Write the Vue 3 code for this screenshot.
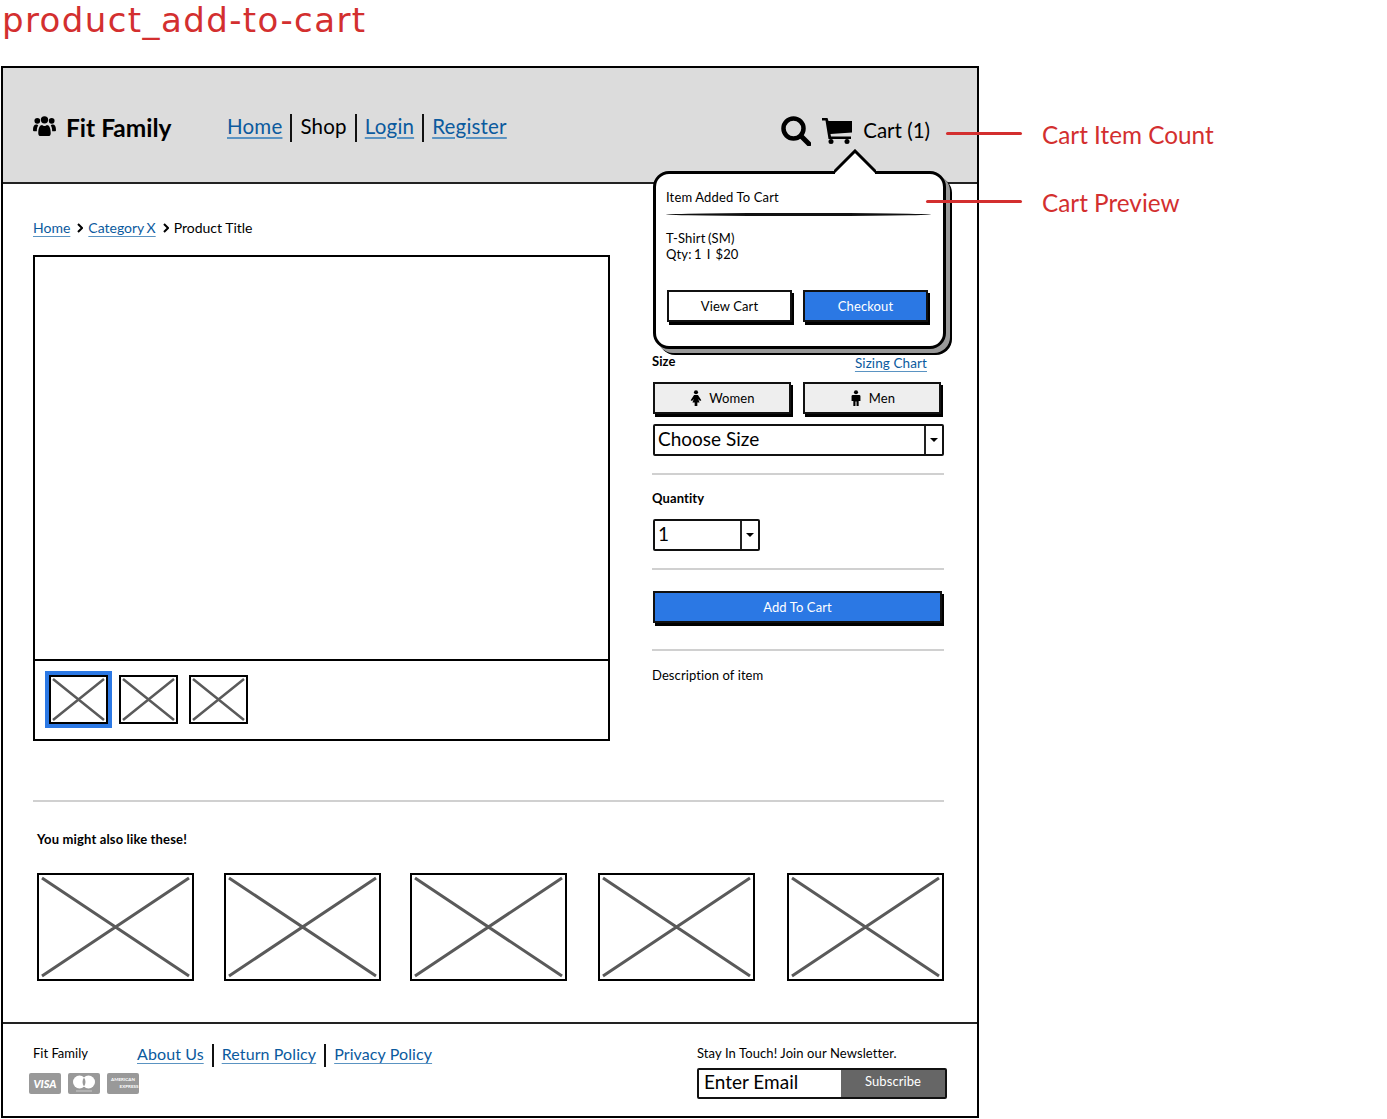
<template>
  <div class="page">
    <h1 class="page-title">product_add-to-cart</h1>

    <div class="frame">
      <header class="topbar">
        <div class="brand">
          <svg class="brand-icon" viewBox="0 0 24 24">
            <circle cx="4.5" cy="6" r="3" />
            <circle cx="12" cy="5" r="3.8" />
            <circle cx="19.5" cy="6" r="3" />
            <path d="M0 16c0-4 1-6 3.5-6 1 0 1.5.6 2 1-1 1.500-1.500 3-1.500 6H1c-.6 0-1-.4-1-1zM24 16c0-4-1-6-3.500-6-1 0-1.500.6-2 1 1 1.500 1.500 3 1.500 6h3c.6 0 1-.4 1-1z" />
            <path d="M5.500 19c0-5 1.500-8.500 4-8.500 1 .8 1.500 1 2.500 1s1.500-.2 2.500-1c2.500 0 4 3.500 4 8.500 0 2-1 3-2.500 3h-8c-1.500 0-2.500-1-2.500-3z" />
          </svg>
          <span>Fit Family</span>
        </div>
        <nav class="nav">
          <template v-for="(item, i) in navItems" :key="item.label">
            <i v-if="i" class="sep"></i>
            <a v-if="item.link" class="link">{{ item.label }}</a>
            <span v-else>{{ item.label }}</span>
          </template>
        </nav>
        <div class="cart-area">
          <svg class="search-icon" viewBox="0 0 30 30">
            <circle cx="12.500" cy="12.500" r="10" fill="none" stroke="#000" stroke-width="4.500" />
            <path d="M20 20l8 8" stroke="#000" stroke-width="5" stroke-linecap="round" />
          </svg>
          <svg class="cart-icon" viewBox="0 0 30 26">
            <path d="M0 0h5.500l1 3H30v11.500L8.500 16l.5 2.500h20V21H6.500L3.500 2.500H0z" />
            <circle cx="9" cy="23.500" r="2.500" />
            <circle cx="25" cy="23.500" r="2.500" />
          </svg>
          <span class="cart-label">Cart (1)</span>
        </div>
      </header>

      <main class="content">
        <div class="crumbs">
          <a class="link">Home</a>
          <svg class="chev" viewBox="0 0 6 10"><path d="M1 1l4 4-4 4" /></svg>
          <a class="link cat">Category X</a>
          <svg class="chev" viewBox="0 0 6 10"><path d="M1 1l4 4-4 4" /></svg>
          <span>Product Title</span>
        </div>

        <div class="product">
          <section class="gallery">
            <div class="gallery-main"></div>
            <div class="gallery-thumbs">
              <div v-for="n in 3" :key="n" class="thumb" :class="{ selected: n === 1 }">
                <svg viewBox="0 0 55 45" preserveAspectRatio="none">
                  <path d="M2 2l51 41M53 2L2 43" />
                </svg>
              </div>
            </div>
          </section>

          <section class="details">
            <div class="size-head">
              <b>Size</b>
              <a class="link">Sizing Chart</a>
            </div>
            <div class="gender-row">
              <button class="btn gender">
                <svg viewBox="0 0 14 18"><circle cx="7" cy="2.500" r="2.300" /><path d="M4.800 5.500h4.400L13 11.500l-1.500 1-2-2.500 1.500 4H8.500v4h-3v-4H3l1.500-4-2 2.500-1.500-1z" /></svg>
                Women
              </button>
              <button class="btn gender">
                <svg viewBox="0 0 14 18"><circle cx="7" cy="2.500" r="2.300" /><path d="M3 5.500h8l1 1v6h-2v5.500H7.600v-5H6.400v5H4v-5.500H2v-6z" /></svg>
                Men
              </button>
            </div>
            <div class="select size-select">
              <span>Choose Size</span>
              <i class="select-arrow"></i>
            </div>
            <hr class="rule" />
            <b class="qty-label">Quantity</b>
            <div class="select qty-select">
              <span>1</span>
              <i class="select-arrow"></i>
            </div>
            <hr class="rule" />
            <button class="btn primary add-btn">Add To Cart</button>
            <hr class="rule rule-last" />
            <p class="desc">Description of item</p>
          </section>
        </div>

        <hr class="rule rule-wide" />

        <h3 class="also">You might also like these!</h3>
        <div class="related">
          <div v-for="n in 5" :key="n" class="related-item">
            <svg viewBox="0 0 153 104" preserveAspectRatio="none">
              <path d="M3 3l147 98M150 3L3 101" />
            </svg>
          </div>
        </div>
      </main>

      <footer class="footer">
        <div class="footer-left">
          <div class="footer-links">
            <span class="footer-brand">Fit Family</span>
            <template v-for="(label, i) in footerLinks" :key="label">
              <i v-if="i" class="sep small"></i>
              <a class="link">{{ label }}</a>
            </template>
          </div>
          <div class="cards">
            <svg viewBox="0 0 32 21">
              <rect width="32" height="21" rx="2" fill="#999" />
              <text x="16" y="15" text-anchor="middle" class="visa">VISA</text>
            </svg>
            <svg viewBox="0 0 32 21">
              <rect width="32" height="21" rx="2" fill="#999" />
              <circle cx="11.500" cy="9" r="6.500" fill="#fff" />
              <circle cx="20.500" cy="9" r="6.500" fill="#fff" />
              <path d="M16 4.500c-2 3-2 6 0 9 2-3 2-6 0-9z" fill="#999" />
              <path d="M8 18h16" stroke="#ccc" />
            </svg>
            <svg viewBox="0 0 32 21">
              <rect width="32" height="21" rx="2" fill="#999" />
              <text x="16" y="8" text-anchor="middle" class="amex">AMERICAN</text>
              <text x="22" y="15" text-anchor="middle" class="amex">EXPRESS</text>
            </svg>
          </div>
        </div>
        <div class="newsletter">
          <p>Stay In Touch! Join our Newsletter.</p>
          <div class="subscribe">
            <span class="email">Enter Email</span>
            <span class="sub-btn">Subscribe</span>
          </div>
        </div>
      </footer>

      <!-- cart preview hangs off the header, over the page -->
      <div class="popover">
        <svg class="notch" viewBox="0 0 42 26">
          <path d="M1 26V22L21 2l20 20v4z" fill="#fff" />
          <path d="M0 23L21 2l21 21" fill="none" stroke="#000" stroke-width="3" />
        </svg>
        <p class="pop-title">Item Added To Cart</p>
        <hr class="pop-rule" />
        <p class="pop-item">T-Shirt (SM)<br />Qty: 1 &nbsp;I&nbsp; $20</p>
        <div class="pop-actions">
          <button class="btn white">View Cart</button>
          <button class="btn primary">Checkout</button>
        </div>
      </div>
    </div>

    <div v-for="c in callouts" :key="c.label" class="callout" :class="c.cls">
      <i></i>
      <span>{{ c.label }}</span>
    </div>
  </div>
</template>

<script setup>
const navItems = [
  { label: 'Home', link: true },
  { label: 'Shop', link: false },
  { label: 'Login', link: true },
  { label: 'Register', link: true }
]

const footerLinks = ['About Us', 'Return Policy', 'Privacy Policy']

const callouts = [
  { label: 'Cart Item Count', cls: 'callout-count' },
  { label: 'Cart Preview', cls: 'callout-preview' }
]
</script>

<style>
body {
  margin: 0;
  background: #fff;
}
</style>

<style scoped>
.page {
  position: relative;
  width: 1387px;
  height: 1119px;
  overflow: hidden;
  font-family: Lato, "Noto Sans", sans-serif;
  color: #000;
}

.page-title {
  margin: 0;
  height: 66px;
  padding-left: 2px;
  font-family: "DejaVu Sans", sans-serif;
  font-size: 34px;
  font-weight: 400;
  line-height: 40px;
  color: #d32f2f;
  letter-spacing: 1.4px;
}

.frame {
  position: relative;
  box-sizing: border-box;
  width: 978px;
  height: 1052px;
  margin-left: 1px;
  border: 2px solid #000;
  display: flex;
  flex-direction: column;
}

.link {
  color: #0b5a9e;
  text-decoration: underline;
  text-decoration-color: #5a93c2;
  text-underline-offset: 3px;
}

.topbar {
  display: flex;
  align-items: center;
  box-sizing: border-box;
  height: 116px;
  padding: 0 47px 0 30px;
  background: #dcdcdc;
  border-bottom: 2px solid #222;
}

.brand {
  display: flex;
  align-items: center;
  gap: 10px;
  width: 194px;
  font-size: 24.500px;
  font-weight: 700;
  margin-top: 4px;
}

.brand-icon {
  width: 23px;
  height: 23px;
  margin-top: -2px;
}

.nav {
  display: flex;
  align-items: center;
  gap: 8px;
  font-size: 20.500px;
  letter-spacing: 0.2px;
  margin-top: 5px;
}

.nav span,
.nav a {
  margin-top: -4px;
}

.sep {
  display: block;
  width: 2px;
  height: 28px;
  background: #111;
}

.sep.small {
  height: 23px;
}

.cart-area {
  display: flex;
  align-items: center;
  margin-left: auto;
  margin-top: 11px;
}

.search-icon {
  width: 30px;
  height: 30px;
}

.cart-icon {
  width: 30px;
  height: 26px;
  margin-left: 11px;
}

.cart-label {
  margin-left: 11px;
  font-size: 20.500px;
  margin-top: -2px;
}

.content {
  flex: 1;
  padding: 33px 33px 0 30px;
}

.crumbs {
  display: flex;
  align-items: center;
  height: 20px;
  font-size: 14px;
}

.cat {
  word-spacing: -1px;
}

.chev {
  width: 6px;
  height: 10px;
  margin: 2px 5px 0 7px;
}

.chev path {
  fill: none;
  stroke: #000;
  stroke-width: 2;
}

.product {
  display: flex;
  gap: 42px;
  margin-top: 18px;
}

.gallery {
  box-sizing: border-box;
  width: 577px;
  height: 486px;
  border: 2px solid #000;
}

.gallery-main {
  height: 402px;
  border-bottom: 2px solid #000;
}

.gallery-thumbs {
  display: flex;
  gap: 11px;
  padding: 14px 0 0 14px;
}

.thumb {
  box-sizing: border-box;
  width: 59px;
  height: 49px;
  border: 2px solid #000;
}

.thumb.selected {
  outline: 4px solid #2b78e4;
}

.thumb svg,
.related-item svg {
  display: block;
  width: 100%;
  height: 100%;
}

.thumb path,
.related-item path {
  fill: none;
  stroke: #5a5a5a;
  stroke-width: 2.500;
  vector-effect: non-scaling-stroke;
}

.related-item path {
  stroke-width: 3;
}

.details {
  width: 292px;
  padding-top: 96px;
  font-size: 13px;
  letter-spacing: 0.1px;
}

.size-head {
  display: flex;
  justify-content: space-between;
  padding-right: 17px;
  height: 20px;
  line-height: 20px;
}

.size-head .link {
  font-size: 13.500px;
  margin-top: 2px;
}

.btn {
  box-sizing: border-box;
  display: flex;
  align-items: center;
  justify-content: center;
  font-family: inherit;
  font-size: 13px;
  letter-spacing: 0.1px;
  padding: 0;
  border: 2px solid #111;
  box-shadow: 2px 3px 0 #000;
  color: #000;
}

.gender-row {
  display: flex;
  gap: 12px;
  margin: 11px 0 0 1px;
}

.gender {
  gap: 6px;
  width: 138px;
  height: 32px;
  background: #eee;
}

.gender svg {
  width: 14px;
  height: 16px;
}

.select {
  box-sizing: border-box;
  position: relative;
  display: flex;
  align-items: center;
  height: 32px;
  margin-left: 1px;
  padding: 0 0 3px 3px;
  border: 2px solid #111;
  border-radius: 2px;
  font-size: 19px;
  letter-spacing: 0;
}

.select-arrow {
  position: absolute;
  top: 0;
  right: 0;
  bottom: 0;
  width: 16px;
  border-left: 2px solid #222;
}

.select-arrow::after {
  content: "";
  position: absolute;
  left: 4px;
  top: 12px;
  border: 4px solid transparent;
  border-top: 4px solid #000;
}

.size-select {
  width: 291px;
  margin-top: 10px;
}

.qty-select {
  width: 107px;
  margin-top: 11px;
}

.rule {
  height: 2px;
  margin: 17px 0 0;
  border: 0;
  background: #d0d0d0;
}

.qty-label {
  display: block;
  height: 20px;
  line-height: 20px;
  margin-top: 13px;
}

.add-btn {
  width: 289px;
  height: 32px;
  margin: 21px 0 0 1px;
}

.primary {
  background: #2b78e4;
  color: #fff;
}

.rule-last {
  margin-top: 26px;
}

.desc {
  margin: 14px 0 0;
  line-height: 20px;
}

.rule-wide {
  margin-top: 59px;
  margin-left: 0;
}

.also {
  margin: 27px 0 0 4px;
  font-size: 13px;
  font-weight: 700;
  letter-spacing: 0.15px;
  line-height: 20px;
}

.related {
  display: flex;
  margin: 24px 0 0 4px;
}

.related-item {
  box-sizing: border-box;
  flex: none;
  width: 157px;
  height: 108px;
  margin-left: 30px;
  border: 2px solid #000;
}

/* gaps in the sketch are not even */
.related-item:first-child {
  margin-left: 0;
}

.related-item:nth-child(3) {
  margin-left: 29px;
}

.related-item:nth-child(4) {
  margin-left: 31px;
}

.related-item:nth-child(5) {
  margin-left: 32px;
}

.footer {
  display: flex;
  justify-content: space-between;
  box-sizing: border-box;
  height: 94px;
  padding: 20px 30px 0 30px;
  border-top: 2px solid #222;
}

.footer-links {
  display: flex;
  align-items: center;
  gap: 8px;
  height: 23px;
  font-size: 16px;
  letter-spacing: 0.1px;
}

.footer-links .link {
  margin-top: -5px;
}

.footer-brand {
  width: 96px;
  font-size: 13px;
  letter-spacing: 0;
  margin-top: -5px;
}

.cards {
  display: flex;
  gap: 7px;
  margin: 6px 0 0 -4px;
}

.cards svg {
  width: 32px;
  height: 21px;
}

.visa {
  font-size: 11px;
  font-weight: 900;
  font-style: italic;
  fill: #fff;
}

.amex {
  font-size: 4.500px;
  font-weight: 700;
  fill: #fff;
}

.newsletter {
  width: 250px;
  font-size: 13px;
  letter-spacing: 0.1px;
}

.newsletter p {
  margin: 0;
  height: 24px;
  line-height: 18px;
}

.subscribe {
  box-sizing: border-box;
  display: flex;
  height: 31px;
  border: 2px solid #111;
  border-radius: 2px;
}

.email {
  flex: 1;
  padding-left: 5px;
  font-size: 19px;
  letter-spacing: 0;
  line-height: 23px;
}

.sub-btn {
  width: 104px;
  background: #666;
  color: #fff;
  text-align: center;
  line-height: 23px;
}

.popover {
  position: absolute;
  left: 650px;
  top: 103px;
  box-sizing: border-box;
  width: 293px;
  height: 178px;
  padding: 13px 12px 0 10px;
  background: #fff;
  border: 3px solid #000;
  border-radius: 16px;
  box-shadow: 4px 4px 0 #999, 6px 6px 0 #000;
  font-size: 13px;
  letter-spacing: 0.15px;
}

.notch {
  position: absolute;
  left: 178px;
  top: -25px;
  width: 42px;
  height: 26px;
}

.pop-title {
  margin: 0;
  line-height: 20px;
}

.pop-rule {
  height: 3px;
  margin: 6px 0 0;
  border: 0;
  border-radius: 50%;
  background: #111;
}

.pop-item {
  margin: 14px 0 0;
  line-height: 16px;
  word-spacing: -1px;
}

.pop-actions {
  display: flex;
  gap: 11px;
  margin-top: 28px;
  padding-left: 1px;
}

.pop-actions .btn {
  width: 125px;
  height: 32px;
}

.white {
  background: #fff;
}

.callout {
  position: absolute;
  display: flex;
  align-items: center;
  color: #d32f2f;
  font-size: 24.300px;
  line-height: 30px;
}

.callout span {
  margin-top: 4px;
}

.callout i {
  display: block;
  height: 3px;
  background: #d32f2f;
  border-radius: 2px;
  margin-right: 20px;
}

.callout-count {
  left: 946px;
  top: 116px;
}

.callout-count i {
  width: 76px;
}

.callout-preview {
  left: 926px;
  top: 184px;
}

.callout-preview i {
  width: 96px;
}
</style>
